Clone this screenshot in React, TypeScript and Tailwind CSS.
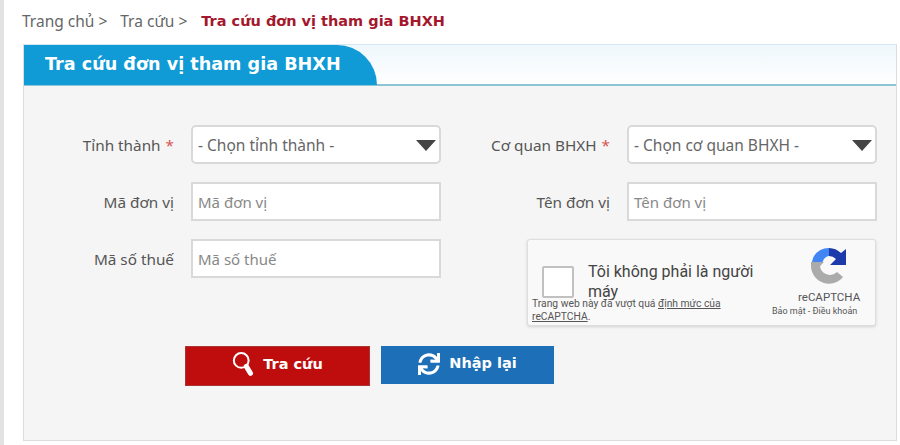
import { FaSync } from 'react-icons/fa'

const labelClass = 'w-[150px] pt-[2px] text-right text-[15.3px] text-[#555]'
const fieldClass =
  'w-[250px] h-[39px] border-2 border-[#d9d9d9] bg-white px-[5px] pt-[2px] flex items-center'

function Label({ text, required }: { text: string; required?: boolean }) {
  return (
    <div className={labelClass}>
      {text}
      {required && <span className="text-[#d9534f] ml-[5px]">*</span>}
    </div>
  )
}

function SelectBox({ text }: { text: string }) {
  return (
    <div className={`${fieldClass} rounded-[5px] justify-between pr-[2px] text-[15.5px] text-[#666]`}>
      <span>{text}</span>
      <span className="w-0 h-0 border-l-[10px] border-r-[10px] border-t-[11px] border-l-transparent border-r-transparent border-t-[#444] mr-[1px]" />
    </div>
  )
}

function InputBox({ text }: { text: string }) {
  return <div className={`${fieldClass} text-[15px] text-[#888]`}>{text}</div>
}

function SearchIcon() {
  return (
    <svg width="24" height="30" viewBox="0 0 26 30" fill="none">
      <circle cx="10" cy="10" r="8" stroke="white" strokeWidth="2.2" />
      <path d="M15.5 16.5 L20 24" stroke="white" strokeWidth="5.5" strokeLinecap="round" />
    </svg>
  )
}

function Captcha() {
  return (
    <div className="relative w-[349px] h-[87px] rounded-[3px] border border-[#dedede] bg-[#f9f9f9] shadow-[0_1px_3px_rgba(0,0,0,0.15)] font-['Roboto',sans-serif]">
      <div className="absolute left-[14px] top-[26px] w-[32px] h-[32px] border-2 border-[#c1c1c1] rounded-[2px] bg-white" />
      <div className="absolute left-[60px] top-[22px] w-[180px] text-[16px] leading-[20px] text-[#444]">
        Tôi không phải là người máy
      </div>
      <svg className="absolute left-[283px] top-[8px]" width="36" height="36" viewBox="0 0 36 36">
        <path d="M18 0 A18 18 0 0 1 30 5 L35 1 V17 H19 L25 11 A10 10 0 0 0 18 8 L14 4 Z" fill="#1c3aa9" />
        <path d="M18 0 A18 18 0 0 0 2 10 L0 18 H9 L12 13 A8 8 0 0 1 18 8 Z" fill="#4285f4" />
        <path d="M0 18 A18 18 0 0 0 32 29 L26 24 A10 10 0 0 1 9 18 L13 14 H0 Z" fill="#ababab" />
      </svg>
      <div className="absolute left-[270px] top-[49px] text-[11.5px] text-[#555]">reCAPTCHA</div>
      <div className="absolute left-[244px] top-[65px] text-[9px] text-[#555]">Bảo mật - Điều khoản</div>
      <div className="absolute left-[4px] top-[57px] w-[205px] text-[10.3px] leading-[13px] text-[#555]">
        Trang web này đã vượt quá <span className="underline">định mức của reCAPTCHA</span>.
      </div>
    </div>
  )
}

export default function App() {
  return (
    <div className="w-[900px] h-[445px] overflow-hidden bg-white border-l-[4px] border-[#e2e2e2] font-['Noto_Sans','DejaVu_Sans',sans-serif]">
      {/* Breadcrumb */}
      <div className="flex items-center h-[44px] pl-[18px] text-[15.5px] text-[#666]">
        <span>Trang chủ &gt;</span>
        <span className="ml-[13px]">Tra cứu &gt;</span>
        <span className="ml-[14px] font-['DejaVu_Sans',sans-serif] font-bold text-[14.5px] text-[#a5172d]">
          Tra cứu đơn vị tham gia BHXH
        </span>
      </div>

      <div className="ml-[19px] w-[874px] h-[397px] border border-[#dcdcdc] border-t-[#d5e8f2] bg-[#f5f5f5]">
        {/* Panel header */}
        <div className="h-[41px] border-b-2 border-[#8cc5d3] bg-gradient-to-b from-[#eef7fc] to-white">
          <div className="w-[353px] h-[40px] bg-[#109ad6] rounded-tr-[42px] pl-[21px] pb-[1px] flex items-center font-['DejaVu_Sans',sans-serif] font-bold text-[17.6px] text-white">
            Tra cứu đơn vị tham gia BHXH
          </div>
        </div>

        <div className="pt-[39px] flex">
          {/* Left column */}
          <div className="flex flex-col gap-[18px]">
            <div className="flex items-center gap-[17px]">
              <Label text="Tỉnh thành" required />
              <SelectBox text="- Chọn tỉnh thành -" />
            </div>
            <div className="flex items-center gap-[17px]">
              <Label text="Mã đơn vị" />
              <InputBox text="Mã đơn vị" />
            </div>
            <div className="flex items-center gap-[17px]">
              <Label text="Mã số thuế" />
              <InputBox text="Mã số thuế" />
            </div>
          </div>

          {/* Right column */}
          <div className="ml-[19px] flex flex-col items-end gap-[18px]">
            <div className="flex items-center gap-[17px]">
              <Label text="Cơ quan BHXH" required />
              <SelectBox text="- Chọn cơ quan BHXH -" />
            </div>
            <div className="flex items-center gap-[17px]">
              <Label text="Tên đơn vị" />
              <InputBox text="Tên đơn vị" />
            </div>
            <div className="pr-[1px]">
              <Captcha />
            </div>
          </div>
        </div>

        {/* Buttons */}
        <div className="mt-[20px] pl-[161px] flex items-start gap-[11px] font-['DejaVu_Sans',sans-serif] font-bold text-[14.5px] text-white">
          <button className="w-[185px] h-[40px] pb-[3px] bg-[#bf0d0d] border border-[#a33] flex items-center justify-center gap-[7px]">
            <SearchIcon />
            <span>Tra cứu</span>
          </button>
          <button className="w-[173px] h-[38px] pb-[2px] bg-[#1d70b8] flex items-center justify-center gap-[9px]">
            <FaSync size={22} />
            <span>Nhập lại</span>
          </button>
        </div>
      </div>
    </div>
  )
}
